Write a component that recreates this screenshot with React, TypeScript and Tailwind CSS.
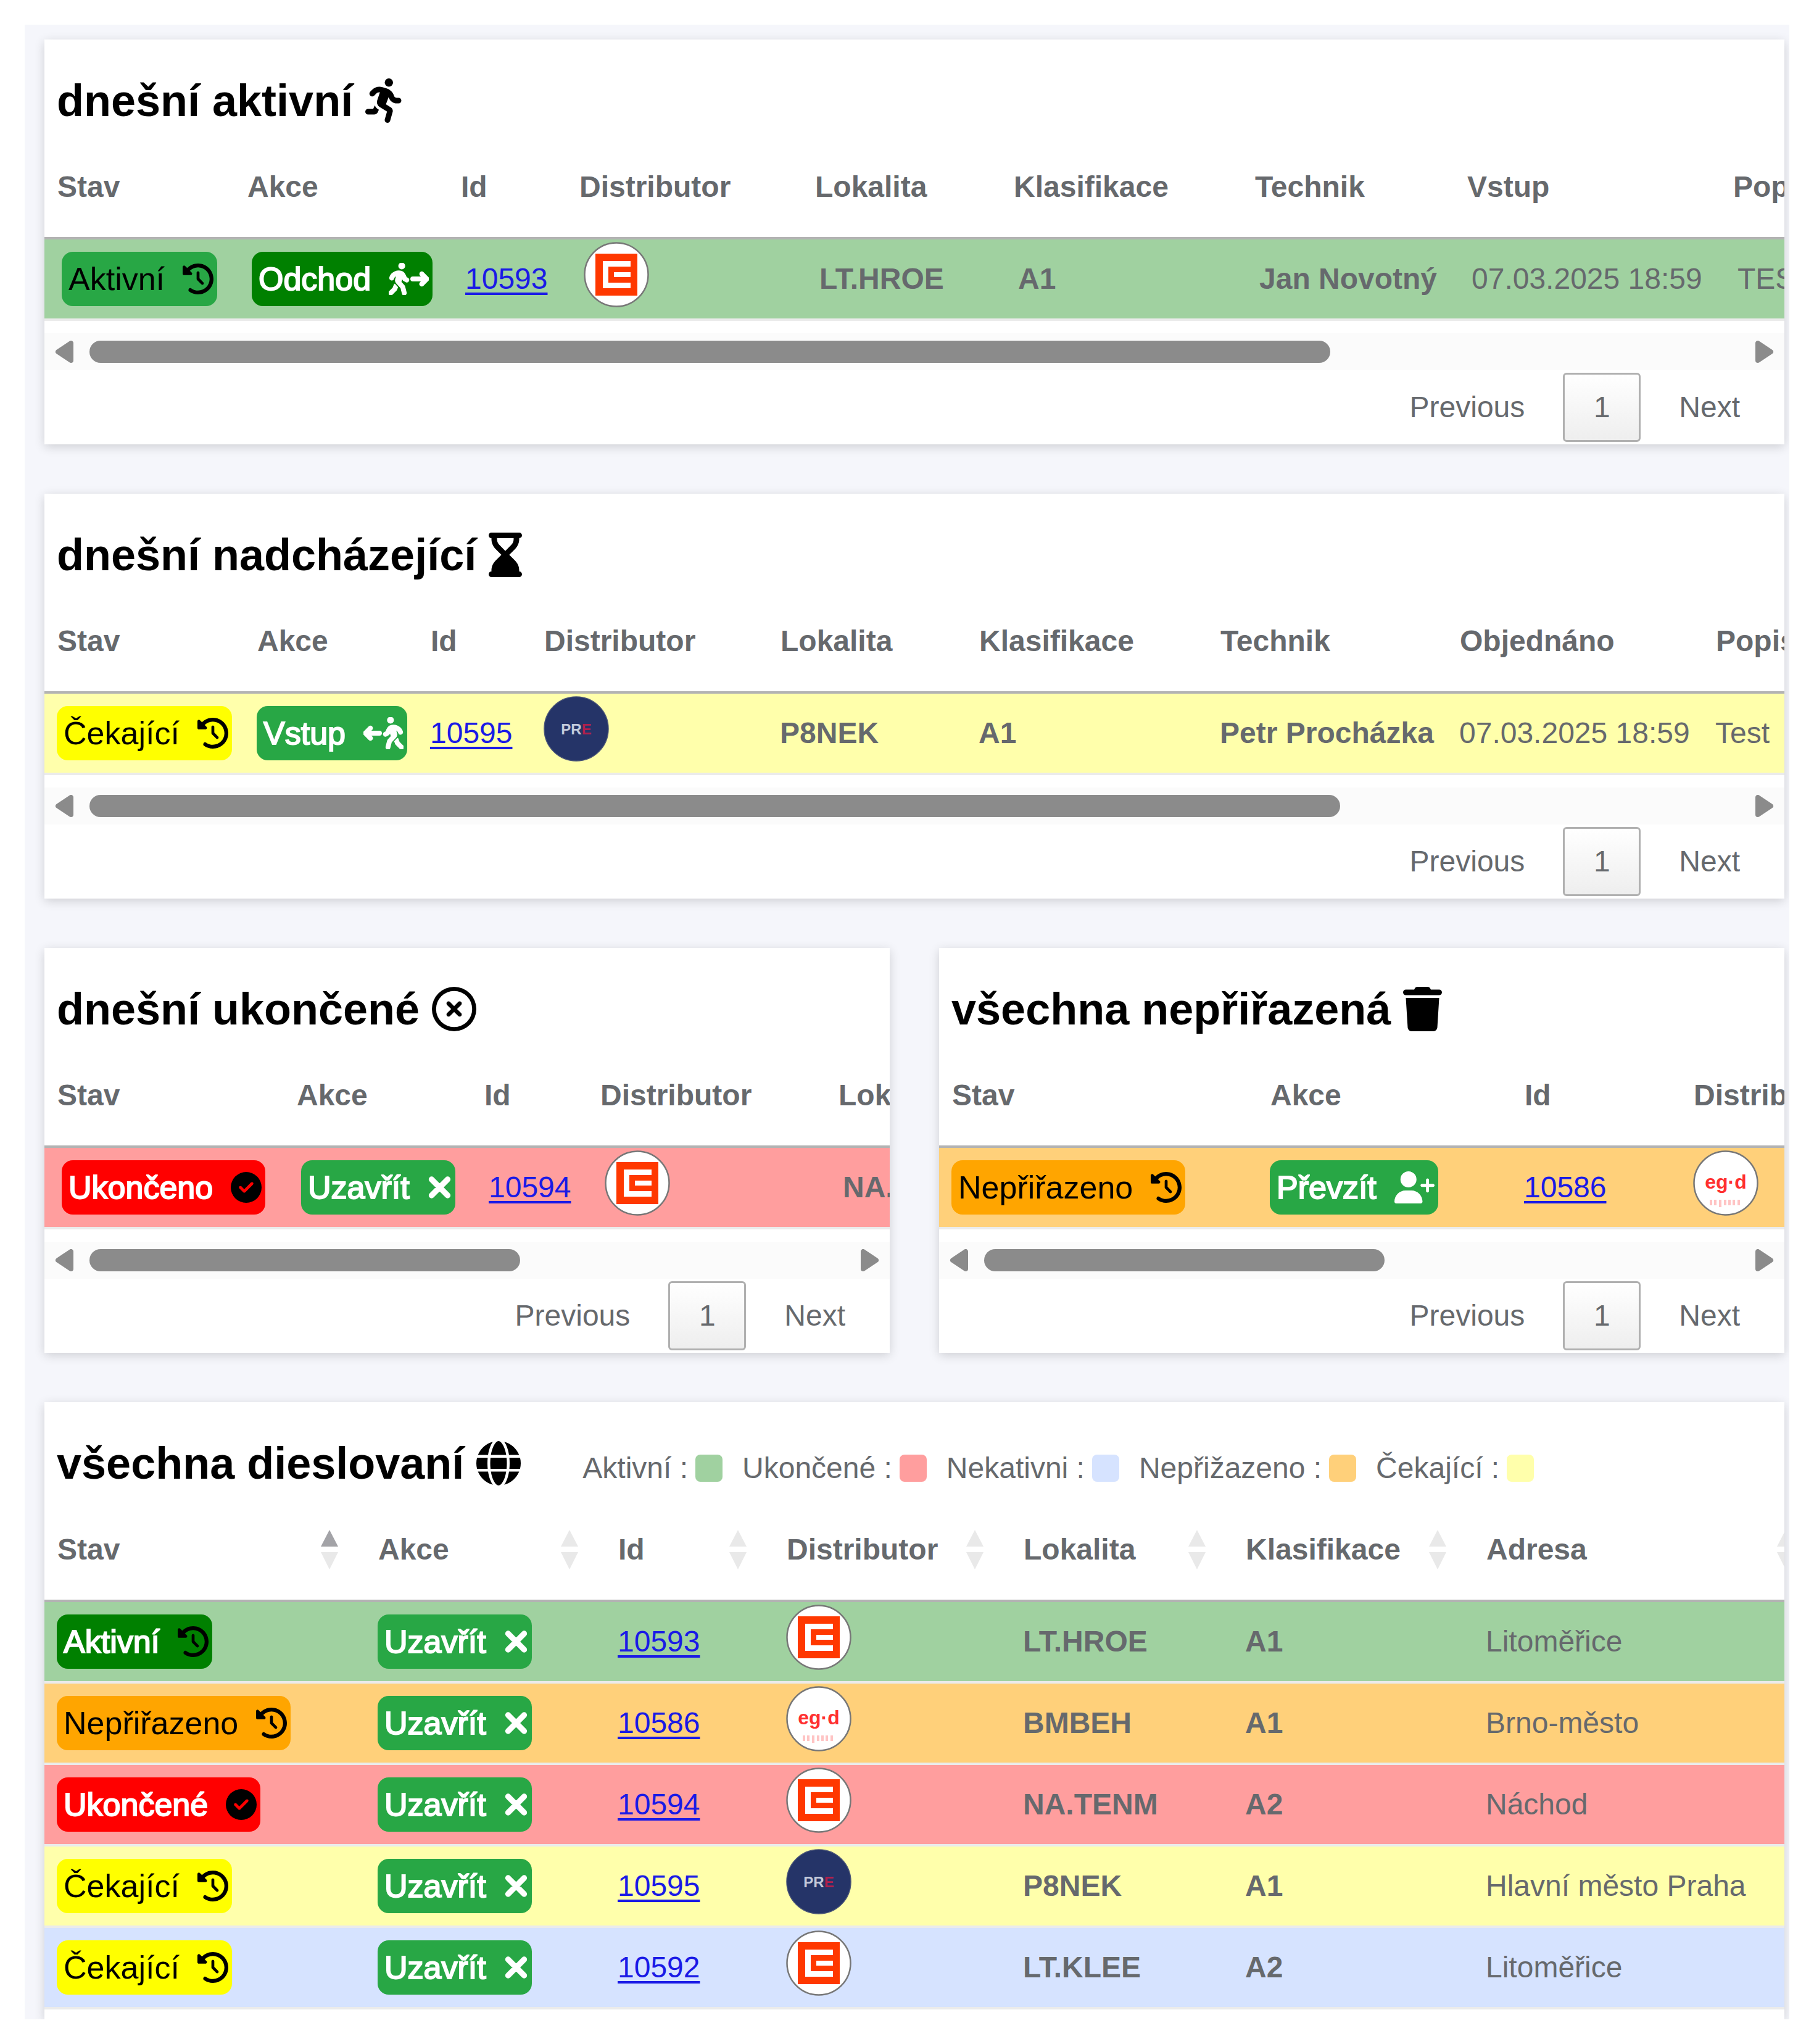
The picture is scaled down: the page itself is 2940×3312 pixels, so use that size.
import React from "react";
import {
  FaCircleCheck,
  FaClockRotateLeft,
  FaGlobe,
  FaHourglassEnd,
  FaPersonRunning,
  FaPersonWalkingArrowRight,
  FaRegCircleXmark,
  FaTrash,
  FaUserPlus,
  FaXmark,
} from "react-icons/fa6";

type Tone = "green" | "orange" | "red" | "yellow" | "blue";

const TONES: Record<Tone, string> = {
  green: "bg-[#a0d1a0]",
  orange: "bg-[#ffd07a]",
  red: "bg-[#ff9e9e]",
  yellow: "bg-[#ffffab]",
  blue: "bg-[#d6e3ff]",
};

const LOGO_FONT = "'Liberation Sans Narrow', 'Liberation Sans', sans-serif";

function CezLogo() {
  return (
    <svg viewBox="0 0 106 106" className="size-[106px]" role="img" aria-label="ČEZ">
      <circle cx="53" cy="53" r="51.5" fill="#fff" stroke="#777" strokeWidth="2.5" />
      <rect x="19" y="19" width="68" height="68" fill="#ff3800" />
      <path d="M31 31H76V40H40V66H76V75H31Z" fill="#fff" />
      <path d="M49 49H76V57H49Z" fill="#fff" />
    </svg>
  );
}

function EgdLogo() {
  return (
    <svg viewBox="0 0 106 106" className="size-[106px]" role="img" aria-label="eg.d">
      <circle cx="53" cy="53" r="51.5" fill="#fff" stroke="#777" strokeWidth="2.5" />
      <text x="53" y="62" textAnchor="middle" fontFamily={LOGO_FONT} fontWeight="700" fontSize="32" fill="#ff3030">
        eg·d
      </text>
      <path d="M29 80v9M36 80v9M44 80v12M52 80v9M59 80v9M66 80v9M74 80v9" stroke="#ffc4c4" strokeWidth="4" />
    </svg>
  );
}

function PreLogo() {
  return (
    <svg viewBox="0 0 106 106" className="size-[106px]" role="img" aria-label="PRE">
      <circle cx="53" cy="53" r="52" fill="#253468" stroke="#4a5578" strokeWidth="1.5" />
      <text x="53" y="62" textAnchor="middle" fontFamily={LOGO_FONT} fontWeight="700" fontSize="24" fill="#c3cadb">
        PR<tspan fill="#b0204c">E</tspan>
      </text>
    </svg>
  );
}

const LOGOS = { cez: CezLogo, egd: EgdLogo, pre: PreLogo };

const BADGE =
  "inline-flex h-[88px] items-center gap-[29px] rounded-[18px] pl-[11px] pr-[6px] text-[52px] leading-none whitespace-nowrap";
const WHITE_LABEL = "[-webkit-text-stroke:2px]";
const ROUND_ICON = "size-[50px]";

function Waiting() {
  return (
    <span className={`${BADGE} bg-[#ffff00] text-black`}>
      Čekající <FaClockRotateLeft className={ROUND_ICON} />
    </span>
  );
}

function Unassigned() {
  return (
    <span className={`${BADGE} bg-[#ffa500] text-black`}>
      Nepřiřazeno <FaClockRotateLeft className={ROUND_ICON} />
    </span>
  );
}

function Finished({ label }: { label: string }) {
  return (
    <span className={`${BADGE} bg-[#ff0000] text-white`}>
      <span className={WHITE_LABEL}>{label}</span> <FaCircleCheck className={`${ROUND_ICON} text-black`} />
    </span>
  );
}

function Action({ label, icon, dark }: { label: string; icon: React.ReactNode; dark?: boolean }) {
  return (
    <button type="button" className={`${BADGE} text-white ${dark ? "bg-[#008000]" : "bg-[#28a745]"}`}>
      <span className={WHITE_LABEL}>{label}</span> {icon}
    </button>
  );
}

const close = <Action label="Uzavřít" icon={<FaXmark strokeWidth={28} stroke="currentColor" className="w-[39px]" />} />;

function IdLink({ id }: { id: string }) {
  return (
    <a href={`#${id}`} className="text-[#1a1ae6] underline decoration-[4px] underline-offset-[6px]">
      {id}
    </a>
  );
}

type Row = {
  tone: Tone;
  state: React.ReactNode;
  action: React.ReactNode;
  id: string;
  logo: keyof typeof LOGOS;
  strong: string[];
  plain: string[];
};

function SortArrows({ ascending }: { ascending?: boolean }) {
  return (
    <svg viewBox="0 0 28 64" className="h-16 w-7" aria-hidden="true">
      <path d="M14 0L28 27H0Z" fill={ascending ? "#a3a3a7" : "#e9e9e9"} />
      <path d="M0 36H28L14 64Z" fill="#e9e9e9" />
    </svg>
  );
}

function DataTable({
  heads,
  widths,
  rows,
  sortable,
  shifted,
}: {
  heads: string[];
  widths: number[];
  rows: Row[];
  sortable?: boolean;
  shifted?: boolean;
}) {
  const total = widths.reduce((a, b) => a + b, 0);
  const cell = shifted ? "pl-7" : "pl-5";
  return (
    <div className="overflow-hidden">
      <table className="table-fixed border-collapse text-left" style={{ width: total }}>
        <colgroup>
          {widths.map((w, i) => (
            <col key={i} style={{ width: w }} />
          ))}
        </colgroup>
        <thead>
          <tr className="h-[164px] border-b-4 border-[#b3b3b3]">
            {heads.map((h, i) => (
              <th key={h} scope="col" className="pr-11 pl-[21px] align-middle font-bold whitespace-nowrap">
                {sortable ? (
                  <button type="button" className="flex w-full items-center justify-between font-bold">
                    {h}
                    <SortArrows ascending={i === 0} />
                  </button>
                ) : (
                  h
                )}
              </th>
            ))}
          </tr>
        </thead>
        <tbody>
          {rows.map((r) => {
            const Logo = LOGOS[r.logo];
            return (
              <tr key={r.id} className={`h-[132px] border-b-4 border-[#ebebeb] whitespace-nowrap ${TONES[r.tone]}`}>
                <td className={cell}>
                  <div className="flex">{r.state}</div>
                </td>
                <td className={cell}>
                  <div className="flex">{r.action}</div>
                </td>
                <td className={cell}>
                  <IdLink id={r.id} />
                </td>
                <td className={`${cell} pt-1 align-top`}>
                  <Logo />
                </td>
                {r.strong.map((s) => (
                  <td key={s} className={`${cell} font-bold`}>
                    {s}
                  </td>
                ))}
                {r.plain.map((s) => (
                  <td key={s} className={cell}>
                    {s}
                  </td>
                ))}
              </tr>
            );
          })}
        </tbody>
      </table>
    </div>
  );
}

function ScrollBar({ share }: { share: number }) {
  return (
    <div className="mt-5 flex h-[60px] items-center gap-[26px] bg-[#fbfbfb] px-[17px]">
      <button type="button" aria-label="Posunout vlevo">
        <svg viewBox="0 0 30 36" className="h-9 w-[30px]">
          <path d="M26 4V32L5 18Z" fill="#8b8b8b" stroke="#8b8b8b" strokeWidth="8" strokeLinejoin="round" />
        </svg>
      </button>
      <div className="flex-1">
        <div className="h-9 rounded-full bg-[#8b8b8b]" style={{ width: `${share}%` }} />
      </div>
      <button type="button" aria-label="Posunout vpravo">
        <svg viewBox="0 0 30 36" className="h-9 w-[30px]">
          <path d="M4 4V32L25 18Z" fill="#8b8b8b" stroke="#8b8b8b" strokeWidth="8" strokeLinejoin="round" />
        </svg>
      </button>
    </div>
  );
}

function Pager() {
  return (
    <nav aria-label="Stránkování" className="flex items-center justify-end gap-[62px] py-1 pr-[72px]">
      <button type="button">Previous</button>
      <button
        type="button"
        aria-current="page"
        className="h-28 w-[126px] rounded-[6px] border-[3px] border-[#b0b0b0] bg-linear-to-b from-white to-[#eeeeee]"
      >
        1
      </button>
      <button type="button">Next</button>
    </nav>
  );
}

function Card({
  title,
  icon,
  legend,
  children,
}: {
  title: string;
  icon: React.ReactNode;
  legend?: React.ReactNode;
  children: React.ReactNode;
}) {
  return (
    <section className="min-w-0 bg-white shadow-[0_4px_16px_rgba(0,0,0,0.16)]">
      <div className="flex h-[158px] items-center gap-[100px] pt-10 pl-5">
        <h2 className="flex items-center gap-5 text-[72px] leading-none font-bold whitespace-nowrap text-black">
          {title}
          {icon}
        </h2>
        {legend}
      </div>
      {children}
    </section>
  );
}

const LEGEND: [string, Tone][] = [
  ["Aktivní :", "green"],
  ["Ukončené :", "red"],
  ["Nekativni :", "blue"],
  ["Nepřižazeno :", "orange"],
  ["Čekající :", "yellow"],
];

function Legend() {
  return (
    <ul className="flex gap-8 pt-4 whitespace-nowrap">
      {LEGEND.map(([label, tone]) => (
        <li key={label} className="flex items-center gap-3">
          {label}
          <span className={`size-11 rounded-[8px] ${TONES[tone]}`} />
        </li>
      ))}
    </ul>
  );
}

const BASE = ["Stav", "Akce", "Id", "Distributor"];
const PLACE = [...BASE, "Lokalita", "Klasifikace"];

const activeRow: Row = {
  tone: "green",
  state: (
    <span className={`${BADGE} bg-[#28a745] text-black`}>
      Aktivní <FaClockRotateLeft className={ROUND_ICON} />
    </span>
  ),
  action: (
    <Action
      dark
      label="Odchod"
      icon={<FaPersonWalkingArrowRight strokeWidth={14} stroke="currentColor" className="w-[65px]" />}
    />
  ),
  id: "10593",
  logo: "cez",
  strong: ["LT.HROE", "A1", "Jan Novotný"],
  plain: ["07.03.2025 18:59", "TEST"],
};

const upcomingRow: Row = {
  tone: "yellow",
  state: <Waiting />,
  action: (
    <Action
      label="Vstup"
      icon={<FaPersonWalkingArrowRight strokeWidth={14} stroke="currentColor" className="w-[65px] -scale-x-100" />}
    />
  ),
  id: "10595",
  logo: "pre",
  strong: ["P8NEK", "A1", "Petr Procházka"],
  plain: ["07.03.2025 18:59", "Test"],
};

const finishedRow: Row = {
  tone: "red",
  state: <Finished label="Ukončeno" />,
  action: close,
  id: "10594",
  logo: "cez",
  strong: ["NA.TENM"],
  plain: [],
};

const unassignedRow: Row = {
  tone: "orange",
  state: <Unassigned />,
  action: <Action label="Převzít" icon={<FaUserPlus className="w-[65px]" />} />,
  id: "10586",
  logo: "egd",
  strong: [],
  plain: [],
};

const allRows: Row[] = [
  {
    tone: "green",
    state: (
      <span className={`${BADGE} bg-[#008000] text-white`}>
        <span className={WHITE_LABEL}>Aktivní</span> <FaClockRotateLeft className={`${ROUND_ICON} text-black`} />
      </span>
    ),
    action: close,
    id: "10593",
    logo: "cez",
    strong: ["LT.HROE", "A1"],
    plain: ["Litoměřice"],
  },
  { tone: "orange", state: <Unassigned />, action: close, id: "10586", logo: "egd", strong: ["BMBEH", "A1"], plain: ["Brno-město"] },
  { tone: "red", state: <Finished label="Ukončené" />, action: close, id: "10594", logo: "cez", strong: ["NA.TENM", "A2"], plain: ["Náchod"] },
  { tone: "yellow", state: <Waiting />, action: close, id: "10595", logo: "pre", strong: ["P8NEK", "A1"], plain: ["Hlavní město Praha"] },
  { tone: "blue", state: <Waiting />, action: close, id: "10592", logo: "cez", strong: ["LT.KLEE", "A2"], plain: ["Litoměřice"] },
];

export default function App() {
  return (
    <div className="bg-white p-10 font-['Liberation_Sans',Arial,sans-serif] text-[48px] leading-[56px] text-[#66696d]">
      <main className="flex flex-col gap-20 overflow-hidden bg-[#f5f6fb] pt-6 pr-2 pl-8">
        <Card title="dnešní aktivní" icon={<FaPersonRunning className="w-[63px]" />}>
          <DataTable
            shifted
            heads={[...PLACE, "Technik", "Vstup", "Popis"]}
            widths={[308, 346, 192, 382, 322, 391, 344, 431, 300]}
            rows={[activeRow]}
          />
          <ScrollBar share={75.2} />
          <Pager />
        </Card>

        <Card title="dnešní nadcházející" icon={<FaHourglassEnd className="w-[54px]" />}>
          <DataTable
            heads={[...PLACE, "Technik", "Objednáno", "Popis"]}
            widths={[324, 281, 184, 383, 322, 391, 388, 415, 300]}
            rows={[upcomingRow]}
          />
          <ScrollBar share={75.8} />
          <Pager />
        </Card>

        <div className="grid grid-cols-2 gap-20">
          <Card title="dnešní ukončené" icon={<FaRegCircleXmark />}>
            <DataTable shifted heads={[...BASE, "Lokalita"]} widths={[388, 304, 188, 386, 322]} rows={[finishedRow]} />
            <ScrollBar share={57} />
            <Pager />
          </Card>
          <Card title="všechna nepřiřazená" icon={<FaTrash className="w-[63px]" />}>
            <DataTable heads={BASE} widths={[516, 412, 274, 384]} rows={[unassignedRow]} />
            <ScrollBar share={53} />
            <Pager />
          </Card>
        </div>

        <Card title="všechna dieslovaní" icon={<FaGlobe />} legend={<Legend />}>
          <div className="pb-4">
            <DataTable
              sortable
              heads={[...PLACE, "Adresa"]}
              widths={[520, 389, 273, 384, 360, 390, 564]}
              rows={allRows}
            />
          </div>
        </Card>
      </main>
    </div>
  );
}
